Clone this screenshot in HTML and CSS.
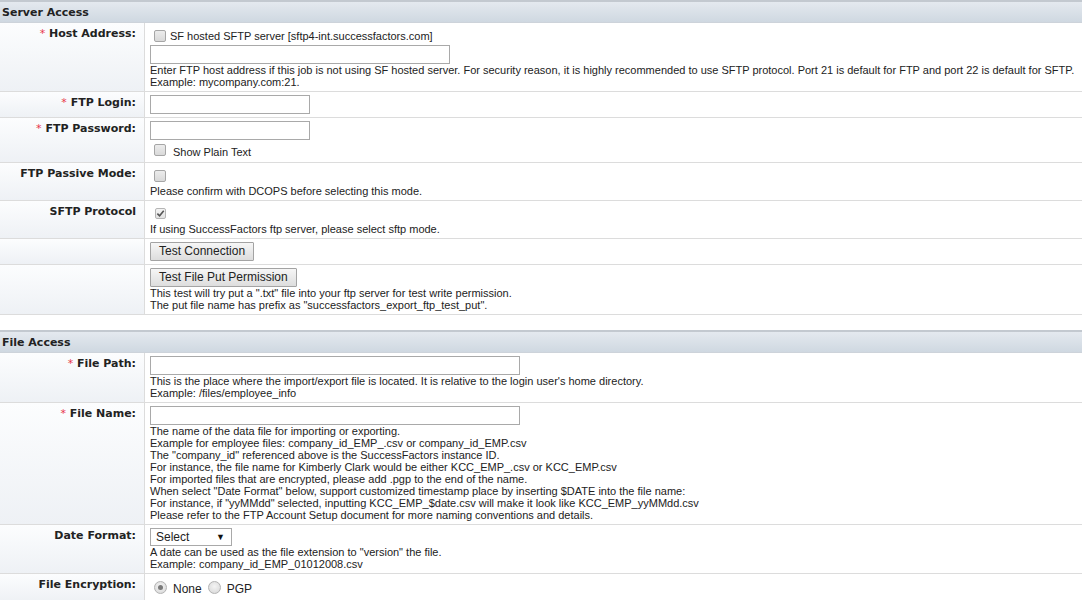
FILE: index.html
```html
<!DOCTYPE html>
<html>
<head>
<meta charset="utf-8">
<link rel="stylesheet" href="styles.css">
</head>
<body>
<div class="section-head">Server Access</div>
<div class="row">
  <div class="label"><span class="req">*</span> Host Address:</div>
  <div class="field">
    <div class="line"><span class="cb"></span><span class="cb-text">SF hosted SFTP server [sftp4-int.successfactors.com]</span></div>
    <span class="input w300"></span>
    <div class="help">Enter FTP host address if this job is not using SF hosted server. For security reason, it is highly recommended to use SFTP protocol. Port 21 is default for FTP and port 22 is default for SFTP.<br>Example: mycompany.com:21.</div>
  </div>
</div>
<div class="row">
  <div class="label"><span class="req">*</span> FTP Login:</div>
  <div class="field"><span class="input w160"></span></div>
</div>
<div class="row">
  <div class="label"><span class="req">*</span> FTP Password:</div>
  <div class="field">
    <span class="input w160"></span>
    <div class="line"><span class="cb"></span><span class="cb-text wide">Show Plain Text</span></div>
  </div>
</div>
<div class="row">
  <div class="label">FTP Passive Mode:</div>
  <div class="field">
    <div class="line"><span class="cb"></span></div>
    <div class="help">Please confirm with DCOPS before selecting this mode.</div>
  </div>
</div>
<div class="row">
  <div class="label">SFTP Protocol</div>
  <div class="field">
    <div class="line"><span class="cb checked"><svg viewBox="0 0 10 10" width="9" height="9"><path d="M1.5 5.2 L4 7.6 L8.6 2" fill="none" stroke="#555" stroke-width="1.8"/></svg></span></div>
    <div class="help">If using SuccessFactors ftp server, please select sftp mode.</div>
  </div>
</div>
<div class="row">
  <div class="label"></div>
  <div class="field"><span class="btn">Test Connection</span></div>
</div>
<div class="row">
  <div class="label"></div>
  <div class="field">
    <span class="btn">Test File Put Permission</span>
    <div class="help">This test will try put a ".txt" file into your ftp server for test write permission.<br>The put file name has prefix as "successfactors_export_ftp_test_put".</div>
  </div>
</div>
<div class="spacer"></div>
<div class="section-head">File Access</div>
<div class="row">
  <div class="label"><span class="req">*</span> File Path:</div>
  <div class="field">
    <span class="input w370"></span>
    <div class="help">This is the place where the import/export file is located. It is relative to the login user's home directory.<br>Example: /files/employee_info</div>
  </div>
</div>
<div class="row">
  <div class="label"><span class="req">*</span> File Name:</div>
  <div class="field">
    <span class="input w370"></span>
    <div class="help">The name of the data file for importing or exporting.<br>Example for employee files: company_id_EMP_.csv or company_id_EMP.csv<br>The "company_id" referenced above is the SuccessFactors instance ID.<br>For instance, the file name for Kimberly Clark would be either KCC_EMP_.csv or KCC_EMP.csv<br>For imported files that are encrypted, please add .pgp to the end of the name.<br>When select "Date Format" below, support customized timestamp place by inserting $DATE into the file name:<br>For instance, if "yyMMdd" selected, inputting KCC_EMP_$date.csv will make it look like KCC_EMP_yyMMdd.csv<br>Please refer to the FTP Account Setup document for more naming conventions and details.</div>
  </div>
</div>
<div class="row">
  <div class="label">Date Format:</div>
  <div class="field">
    <span class="select"><span>Select</span><span class="arrow">▼</span></span>
    <div class="help">A date can be used as the file extension to "version" the file.<br>Example: company_id_EMP_01012008.csv</div>
  </div>
</div>
<div class="row">
  <div class="label">File Encryption:</div>
  <div class="field">
    <div class="line radios"><span class="radio on"></span><span class="r-text">None</span><span class="radio"></span><span class="r-text">PGP</span></div>
  </div>
</div>
</body>
</html>
```
FILE: styles.css
```css
html, body { margin: 0; padding: 0; background: #fff; }
body { font-family: "Liberation Sans", Arial, sans-serif; font-size: 11px; color: #222; width: 1082px; }

.section-head {
  font-family: "DejaVu Sans", Verdana, sans-serif;
  font-weight: bold;
  font-size: 11px;
  color: #222;
  height: 20px;
  line-height: 21px;
  padding-left: 2px;
  border-top: 2px solid #c3c9d0;
  border-bottom: 1px solid #cdd3da;
  background: linear-gradient(#e4e9ef, #cfd8e1);
}
.spacer { height: 15px; }

.row {
  display: grid;
  grid-template-columns: 145px 1fr;
  border-bottom: 1px solid #dcdcdc;
}
.label {
  font-family: "DejaVu Sans", Verdana, sans-serif;
  font-weight: bold;
  font-size: 11px;
  color: #222;
  text-align: right;
  padding: 4px 8px 4px 4px;
  border-right: 1px solid #dcdcdc;
  background: linear-gradient(#fcfdfe, #eef1f5);
}
.req { color: #e8344a; font-weight: normal; }
.field { padding: 3px 5px 3px 5px; min-width: 0; }

.line { height: 19px; display: flex; align-items: center; }
.cb {
  box-sizing: border-box;
  width: 12px; height: 12px;
  margin-left: 4px;
  border: 1px solid #a6a6a6;
  border-radius: 2px;
  background: linear-gradient(#ececec, #d9d9d9);
  display: inline-flex; align-items: center; justify-content: center;
}
.cb.checked { width: 11px; height: 11px; margin-left: 5px; background: linear-gradient(#f4f4f4, #e2e2e2); border-color: #b5b5b5; }
.cb-text { font-size: 11px; margin-left: 4px; }
.cb-text.wide { margin-left: 7px; margin-top: 4px; }

.input {
  display: block;
  box-sizing: border-box;
  height: 19px;
  border: 1px solid #a9a9a9;
  background: #fff;
}
.w160 { width: 160px; }
.w300 { width: 300px; }
.w370 { width: 370px; }

.help { line-height: 12px; font-size: 11px; }

.btn {
  display: inline-block;
  box-sizing: border-box;
  height: 19px;
  line-height: 17px;
  padding: 0 8px;
  font-size: 12px;
  color: #222;
  border: 1px solid #a3a3a3;
  border-radius: 1px;
  background: linear-gradient(#f6f6f6, #dddddd);
}

.select {
  box-sizing: border-box;
  display: flex;
  justify-content: space-between;
  align-items: center;
  width: 82px; height: 18px;
  padding: 0 6px 0 5px;
  font-size: 12px;
  border: 1px solid #a9a9a9;
  background: #fff;
}
.select .arrow { font-size: 9px; color: #111; }

.radios { height: 21px; }
.radio {
  box-sizing: border-box;
  width: 13px; height: 13px;
  border-radius: 50%;
  border: 1px solid #b3b3b3;
  background: radial-gradient(circle at 50% 40%, #f4f4f4, #d6d6d6);
  display: inline-flex; align-items: center; justify-content: center;
  margin-left: 4px;
}
.radio.on::after {
  content: "";
  width: 5px; height: 5px; border-radius: 50%;
  background: #7a7a7a;
}
.r-text { font-size: 12px; margin: 3px 2px 0 6px; }
```
